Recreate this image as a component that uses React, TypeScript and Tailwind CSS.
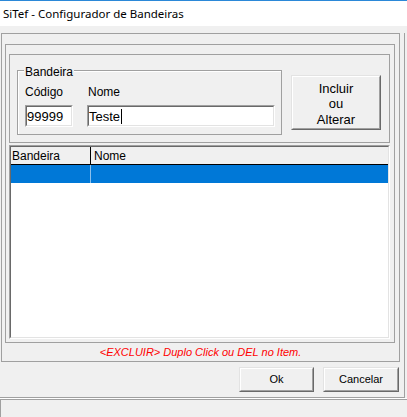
import React from "react";

function RaisedButton({
  className,
  children,
}: {
  className: string;
  children: React.ReactNode;
}) {
  return (
    <div
      className={
        "border border-t-[#e3e3e3] border-l-[#e3e3e3] border-r-[#696969] border-b-[#696969] shrink-0 " +
        className
      }
    >
      <div className="w-full h-full border border-t-white border-l-white border-r-[#a0a0a0] border-b-[#a0a0a0] bg-[#f0f0f0] flex flex-col items-center justify-center text-black">
        {children}
      </div>
    </div>
  );
}

function SunkenInput({
  className,
  children,
}: {
  className: string;
  children: React.ReactNode;
}) {
  return (
    <div
      className={
        "border border-t-[#a0a0a0] border-l-[#a0a0a0] border-r-white border-b-white shrink-0 " +
        className
      }
    >
      <div className="w-full h-full border border-t-[#696969] border-l-[#696969] border-r-[#e3e3e3] border-b-[#e3e3e3] bg-white flex items-center text-[13px] leading-[15px] text-black">
        {children}
      </div>
    </div>
  );
}

export default function App() {
  return (
    <div
      className="w-[407px] h-[417px] bg-[#f0f0f0] overflow-hidden flex flex-col"
      style={{ fontFamily: '"Liberation Sans", Arial, sans-serif' }}
    >
      {/* Title bar */}
      <div className="h-[26px] shrink-0 bg-white border-t border-[#2b88d8] flex items-center pl-[3px]">
        <span
          className="text-[11.5px] leading-[16px] text-black"
          style={{ fontFamily: '"Noto Sans", "Open Sans", sans-serif' }}
        >
          SiTef - Configurador de Bandeiras
        </span>
      </div>
      <div className="h-[7px] shrink-0" />

      {/* Outer frame */}
      <div className="w-[405px] h-[365px] shrink-0 border-r border-b border-[#a0a0a0] flex flex-col">
        {/* Inner panel */}
        <div className="ml-[1px] w-[399px] h-[329px] shrink-0 border border-[#a0a0a0] flex flex-col">
          {/* Box 2 */}
          <div className="ml-[3px] mt-[10px] w-[390px] h-[299px] shrink-0 border border-[#a0a0a0] flex flex-col">
            {/* Box 3 */}
            <div className="ml-[3px] mt-[9px] w-[381px] h-[89px] shrink-0 border border-[#a0a0a0] flex items-start">
              {/* Group box */}
              <div className="relative ml-[7px] mt-[15px] w-[265px] h-[65px] shrink-0 border border-[#a0a0a0] shadow-[inset_1px_1px_0_#ffffff] flex flex-col">
                <span className="absolute left-[6px] top-[-6px] px-[1px] bg-[#f0f0f0] text-[12px] leading-[14px] text-black">
                  Bandeira
                </span>
                <div className="flex pt-[14px] pl-[7px] text-[12px] leading-[14px] text-black">
                  <span className="w-[62px]">Código</span>
                  <span className="ml-[1px]">Nome</span>
                </div>
                <div className="flex mt-[6px] pl-[7px]">
                  <SunkenInput className="w-[48px] h-[22px]">
                    <span>99999</span>
                  </SunkenInput>
                  <SunkenInput className="ml-[14px] w-[188px] h-[22px]">
                    <span>Teste</span>
                    <span className="inline-block w-[1px] h-[15px] bg-black ml-[1px]" />
                  </SunkenInput>
                </div>
              </div>
              {/* Incluir button */}
              <RaisedButton className="ml-[9px] mt-[20px] w-[90px] h-[55px]">
                <div className="text-[13px] leading-[15.5px] text-center pt-[3px]">
                  <div>Incluir</div>
                  <div>ou</div>
                  <div>Alterar</div>
                </div>
              </RaisedButton>
            </div>

            {/* List view */}
            <div className="ml-[3px] mt-[2px] w-[381px] h-[194px] shrink-0 border border-t-[#a0a0a0] border-l-[#a0a0a0] border-r-white border-b-white">
              <div className="w-full h-full border border-t-[#696969] border-l-[#696969] border-r-[#e3e3e3] border-b-[#e3e3e3] bg-white flex flex-col">
                {/* Header */}
                <div className="h-[18px] shrink-0 flex bg-[#f0f0f0] border-b border-black text-[12px] leading-[14px] text-black">
                  <div className="w-[80px] shrink-0 border-r border-black flex items-center pl-[1px]">
                    Bandeira
                  </div>
                  <div className="flex-1 flex items-center pl-[3px]">Nome</div>
                </div>
                {/* Selected row */}
                <div className="h-[18px] shrink-0 flex bg-[#0078d7]">
                  <div className="w-[80px] shrink-0 border-r border-[#8cc0ec]" />
                  <div className="flex-1" />
                </div>
              </div>
            </div>
          </div>
          {/* Red hint */}
          <div className="h-[18px] shrink-0 flex items-center justify-center">
            <span className="text-[11px] leading-[13px] italic text-[#ff0000]">
              &lt;EXCLUIR&gt; Duplo Click ou DEL no Item.
            </span>
          </div>
        </div>

        {/* Buttons row */}
        <div className="flex justify-end gap-[9px] mt-[5px] pr-[5px]">
          <RaisedButton className="w-[75px] h-[25px]">
            <span className="text-[11px] leading-[13px]">Ok</span>
          </RaisedButton>
          <RaisedButton className="w-[76px] h-[25px]">
            <span className="text-[11px] leading-[13px]">Cancelar</span>
          </RaisedButton>
        </div>
      </div>

      <div className="h-[1px] shrink-0 bg-white" />
      {/* Status bar */}
      <div className="flex-1 border-t border-l border-[#a0a0a0]" />
    </div>
  );
}
